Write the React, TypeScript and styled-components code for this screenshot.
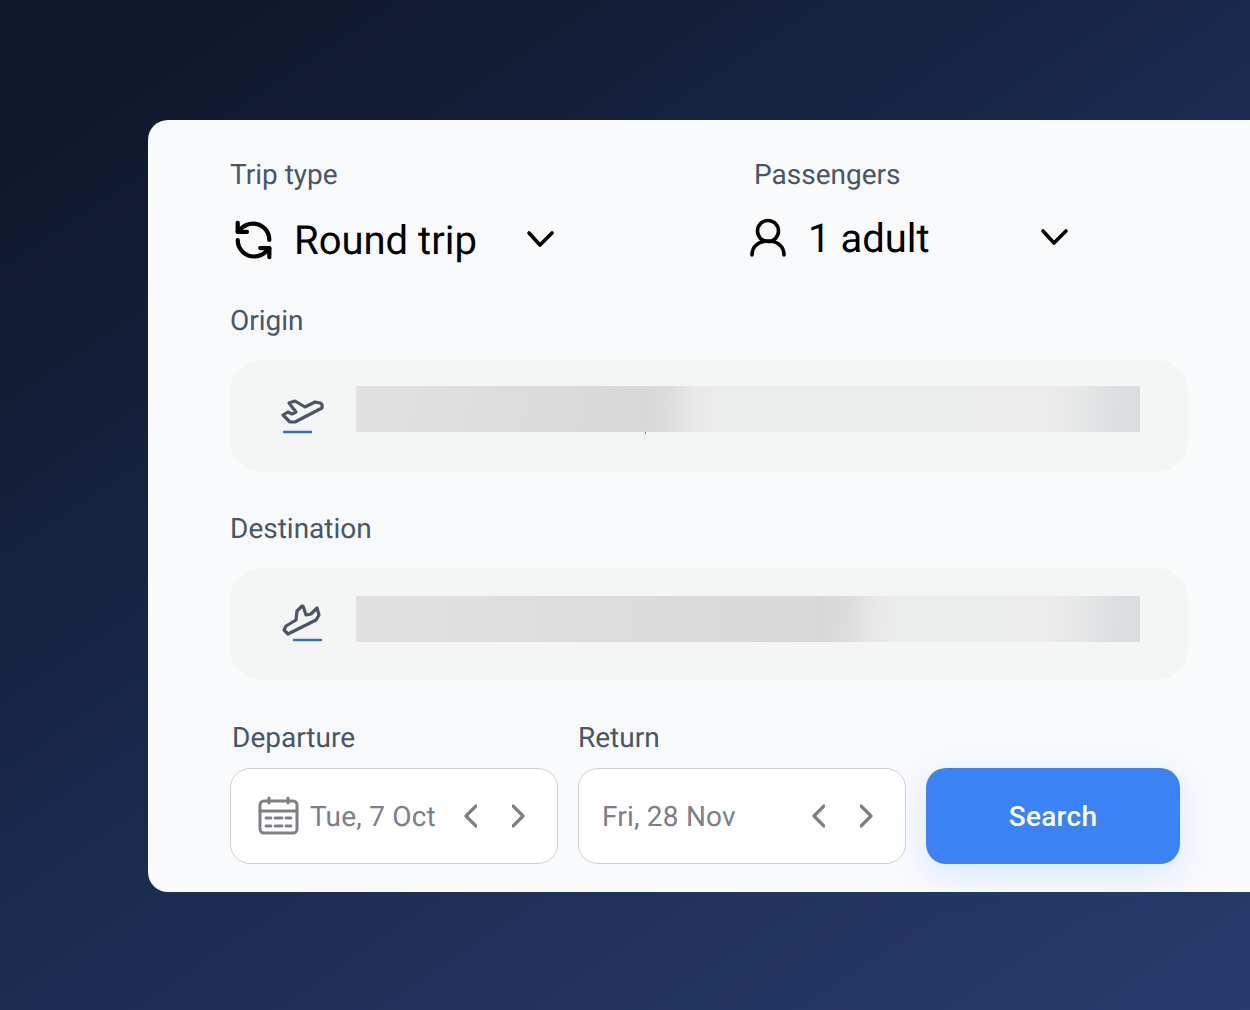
import styled, { createGlobalStyle } from "styled-components";

const GlobalStyle = createGlobalStyle`
	html, body {
		margin: 0;
		padding: 0;
	}
	body {
		font-family: Roboto, "Liberation Sans", sans-serif;
		text-rendering: geometricPrecision;
	}
`;

const Page = styled("main")`
	width: 1250px;
	height: 1010px;
	overflow: hidden;
	padding: 120px 0 0 148px;
	box-sizing: border-box;
	background: linear-gradient(146deg, #0f172a 8%, #1a2b4f 50%, #293b6d 100%);
`;

const Card = styled("section")`
	width: 1102px;
	height: 772px;
	box-sizing: border-box;
	padding: 39px 62px 0 82px;
	background-color: #f8fafc;
	border-radius: 20px 0 0 20px;
`;

const TopRow = styled("div")`
	display: flex;
	margin-bottom: 41px;
`;

const Column = styled("div")`
	flex: none;
	width: 524px;
`;

const Label = styled("div")<{ $indent?: number }>`
	font-size: 28px;
	line-height: 32px;
	color: #4b5563;
	margin-left: ${({ $indent }) => $indent ?? 0}px;
`;

const Select = styled("div")<{ $iconWidth: number; $lift?: number }>`
	display: grid;
	grid-template-columns: ${({ $iconWidth }) => $iconWidth}px 232px 32px;
	align-items: center;
	height: 48px;
	margin-top: ${({ $lift }) => 25 - ($lift ?? 0)}px;
	margin-bottom: ${({ $lift }) => $lift ?? 0}px;
	font-size: 40px;
	color: #000;
`;

const Field = styled("div")<{ $barTop: number }>`
	display: flex;
	box-sizing: border-box;
	height: 112px;
	margin: 23px 0 41px;
	padding: ${({ $barTop }) => $barTop}px 48px 0 44px;
	background-color: #f4f6f5;
	border-radius: 32px;
`;

const FieldIcon = styled("svg")`
	flex: none;
	width: 82px;
	height: 48px;
	margin-top: 6px;
`;

const BlurBar = styled("div")<{ $end: number }>`
	position: relative;
	flex: 1;
	height: 46px;
	background: linear-gradient(
		94deg,
		#e0e1e0 0%,
		#d7d8d7 ${({ $end }) => $end - 1}%,
		#dcdddc ${({ $end }) => $end + 2}%,
		#e7e8e7 ${({ $end }) => $end + 5}%,
		#ebecec ${({ $end }) => $end + 8}%,
		#ececec 88%,
		#e6e7e7 92%,
		#dcdde0 97%,
		#dcdde0 100%
	);
`;

const Speck = styled("span")`
	position: absolute;
	left: 289px;
	top: 46px;
	width: 1px;
	height: 2px;
	background-color: #8a8d90;
`;

const DateLabels = styled("div")`
	display: flex;
	margin-bottom: 14px;
	padding-top: 1px;
`;

const DateLabel = styled(Label)`
	width: 346px;
`;

const DateRow = styled("div")`
	display: flex;
	gap: 20px;
`;

const DateBox = styled("div")<{ $inset: number }>`
	display: flex;
	align-items: center;
	box-sizing: border-box;
	width: 328px;
	height: 96px;
	padding: 0 32px 0 ${({ $inset }) => $inset}px;
	background-color: #fff;
	border: 1px solid #d1d1d1;
	border-radius: 20px;
`;

const DateText = styled("span")`
	flex: 1;
	font-size: 28px;
	letter-spacing: 0.2px;
	color: #7d8087;
`;

const Stepper = styled("div")`
	display: flex;
	gap: 35px;
`;

const SearchButton = styled("button")`
	width: 254px;
	height: 96px;
	padding: 0;
	border: 0;
	border-radius: 20px;
	background-color: #3b82f6;
	color: #fff;
	font-family: inherit;
	font-size: 28px;
	font-weight: 500;
	letter-spacing: 0.3px;
	box-shadow: 0 10px 34px rgba(59, 130, 246, 0.15);
`;

const Chevron = () => (
	<svg width="32" height="20" viewBox="0 0 32 20" fill="none" stroke="#000" strokeWidth="3.6" strokeLinecap="round" strokeLinejoin="round">
		<polyline points="3,3 14,15 26,3" />
	</svg>
);

const RefreshIcon = () => (
	<svg width="46" height="46" viewBox="0 0 24 24" fill="none" stroke="#000" strokeWidth="2.2" strokeLinecap="round" strokeLinejoin="round" style={{ marginLeft: 1 }}>
		<path d="M20 12a8.6 8.6 0 0 0-8.6-8.6 9 9 0 0 0-6.2 2.6L3.5 7.6" />
		<path d="M3.5 3v4.8h4.8" />
		<path d="M3.5 12a8.6 8.6 0 0 0 8.6 8.6 9 9 0 0 0 6.2-2.6l1.7-1.6" />
		<path d="M15.2 16.2H20V21" />
	</svg>
);

const UserIcon = () => (
	<svg width="46" height="46" viewBox="0 0 46 46" fill="none" stroke="#000" strokeWidth="3.6" strokeLinecap="round" style={{ marginLeft: -9 }}>
		<circle cx="23" cy="16" r="10.5" />
		<path d="M7 40c0-9 7-14 16-14s16 5 16 14" />
	</svg>
);

const TakeoffIcon = () => (
	<FieldIcon viewBox="0 0 82 48" fill="none">
		<path
			d="M46 11L41 10 31 15 21 9 15 11 22 20 18 22 14 20 9 23 16 30 21 30 48 16Q49 12 46 11Z"
			stroke="#4b5563"
			strokeWidth="3.2"
			strokeLinejoin="round"
		/>
		<path d="M10 40H37" stroke="#3b6ea8" strokeWidth="2.4" strokeLinecap="round" />
	</FieldIcon>
);

const LandingIcon = () => (
	<FieldIcon viewBox="0 0 82 48" fill="none">
		<path
			d="M28 4L23 9 22 18 12 24 10 28 14 32 42 18 45 13 43 6 37 12 32 13 29 4Z"
			stroke="#4b5563"
			strokeWidth="3.2"
			strokeLinejoin="round"
		/>
		<path d="M20 38H47" stroke="#3b6ea8" strokeWidth="2.4" strokeLinecap="round" />
	</FieldIcon>
);

const CalendarIcon = () => (
	<svg width="52" height="40" viewBox="0 0 52 40" fill="none" stroke="#7d8087" strokeWidth="3" strokeLinecap="round" style={{ flex: "none" }}>
		<rect x="2" y="5" width="37" height="32" rx="4" />
		<path d="M2 15H39M11 2V7M30 2V7" />
		<path d="M8 22H13M17 22H24M28 22H33M8 30H13M17 30H24M28 30H33" strokeWidth="2.8" />
	</svg>
);

const StepLeft = () => (
	<svg width="13" height="24" viewBox="0 0 13 24" fill="none" stroke="#7d8087" strokeWidth="3.2" strokeLinecap="round" strokeLinejoin="round">
		<polyline points="12,2 2,12 12,22" />
	</svg>
);

const StepRight = () => (
	<svg width="13" height="24" viewBox="0 0 13 24" fill="none" stroke="#7d8087" strokeWidth="3.2" strokeLinecap="round" strokeLinejoin="round">
		<polyline points="1,2 11,12 1,22" />
	</svg>
);

const App = () => {
	return (
		<>
			<GlobalStyle />
			<Page>
				<Card>
					<TopRow>
						<Column>
							<Label>Trip type</Label>
							<Select $iconWidth={64}>
								<RefreshIcon />
								<span>Round trip</span>
								<Chevron />
							</Select>
						</Column>
						<Column>
							<Label>Passengers</Label>
							<Select $iconWidth={54} $lift={2}>
								<UserIcon />
								<span>1 adult</span>
								<Chevron />
							</Select>
						</Column>
					</TopRow>

					<Label>Origin</Label>
					<Field $barTop={26}>
						<TakeoffIcon />
						<BlurBar $end={38}>
							<Speck />
						</BlurBar>
					</Field>

					<Label>Destination</Label>
					<Field $barTop={28}>
						<LandingIcon />
						<BlurBar $end={61} />
					</Field>

					<DateLabels>
						<DateLabel $indent={2}>Departure</DateLabel>
						<Label>Return</Label>
					</DateLabels>
					<DateRow>
						<DateBox $inset={27}>
							<CalendarIcon />
							<DateText>Tue, 7 Oct</DateText>
							<Stepper>
								<StepLeft />
								<StepRight />
							</Stepper>
						</DateBox>
						<DateBox $inset={23}>
							<DateText>Fri, 28 Nov</DateText>
							<Stepper>
								<StepLeft />
								<StepRight />
							</Stepper>
						</DateBox>
						<SearchButton>Search</SearchButton>
					</DateRow>
				</Card>
			</Page>
		</>
	);
};

export default App;
